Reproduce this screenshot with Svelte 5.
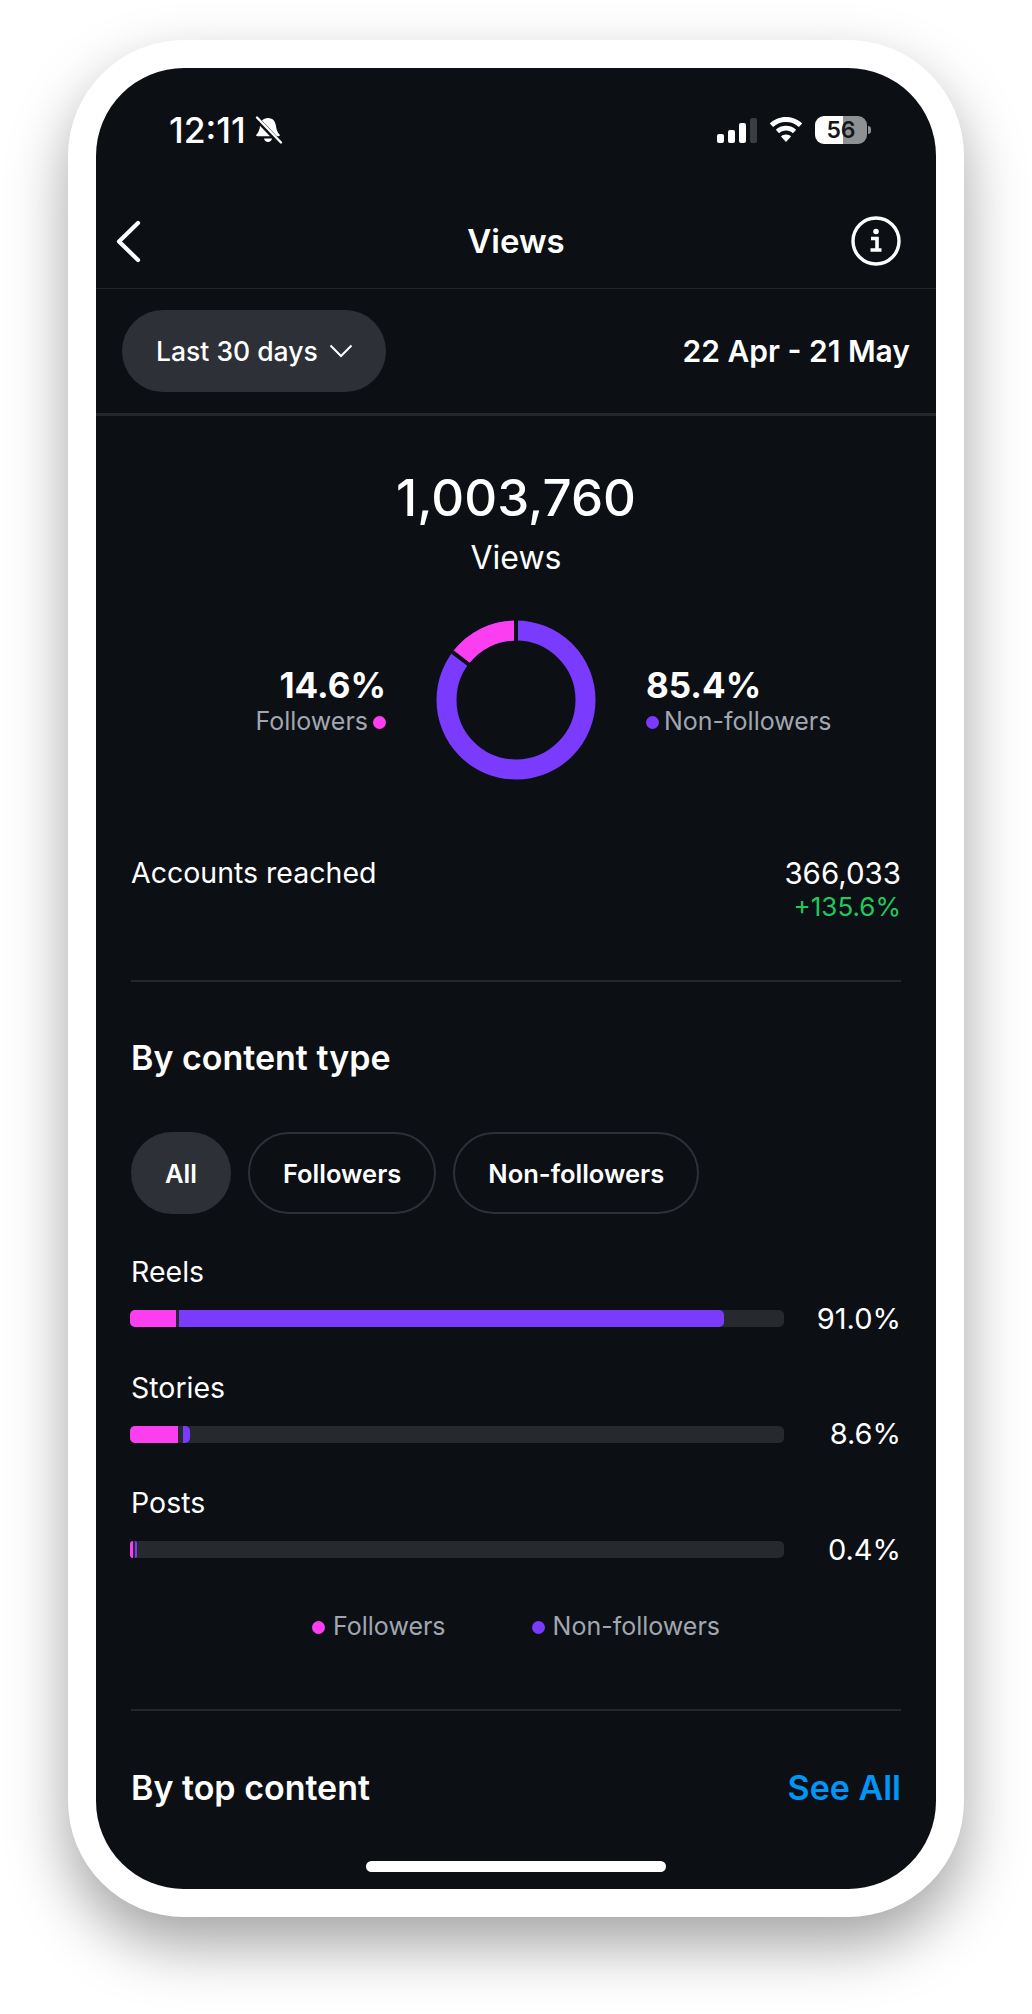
<script>
  const rows = [
    { label: 'Reels', pct: '91.0%', pink: 46, purple: 545, start: 49 },
    { label: 'Stories', pct: '8.6%', pink: 48, purple: 7, start: 53 },
    { label: 'Posts', pct: '0.4%', pink: 3, purple: 2, start: 5 }
  ];
  const tabs = ['All', 'Followers', 'Non-followers'];
</script>

<div class="page">
  <div class="frame">
    <div class="screen">
      <div class="status">
        <div class="time">
          <span>12:11</span>
          <svg width="30" height="30" viewBox="0 0 30 30">
            <path d="M15 3c-5 0-7.500 3.600-8 8-.4 4-1.700 6.500-3.500 8.500-.6.800-.2 1.700.8 1.700h21.400c1 0 1.400-.9.800-1.700-1.800-2-3.100-4.500-3.500-8.500-.5-4.400-3-8-8-8z" fill="#fff"/>
            <path d="M11 23.500h8c-.3 2.200-2 3.500-4 3.500s-3.700-1.300-4-3.500z" fill="#fff"/>
            <path d="M3 3 27 28" stroke="#0c0f14" stroke-width="5"/>
            <path d="M4 2.500 28 27.500" stroke="#fff" stroke-width="2.400" stroke-linecap="round"/>
          </svg>
        </div>
        <div class="indicators">
          <div class="signal">
            <i style="height: 9px"></i>
            <i style="height: 13px"></i>
            <i style="height: 20px"></i>
            <i class="off" style="height: 25px"></i>
          </div>
          <svg class="wifi" width="34" height="26" viewBox="0 0 34 26">
            <path d="M17 0C10.500 0 5 2.500.8 6.500l3.300 3.500C7.500 6.800 12 4.900 17 4.900s9.500 1.900 12.900 5.100l3.300-3.500C29 2.500 23.500 0 17 0z" fill="#fff"/>
            <path d="M17 8.800c-4 0-7.500 1.500-10.200 4l3.300 3.500c1.800-1.700 4.200-2.700 6.900-2.700s5.100 1 6.900 2.700l3.300-3.500c-2.700-2.500-6.200-4-10.200-4z" fill="#fff"/>
            <path d="M17 17.500c-2 0-3.700.7-5 1.900l5 5.600 5-5.600c-1.300-1.200-3-1.900-5-1.900z" fill="#fff"/>
          </svg>
          <div class="battery">
            <div class="cell"><span>56</span></div>
            <div class="cap"></div>
          </div>
        </div>
      </div>

      <div class="nav">
        <svg class="back" width="28" height="44" viewBox="0 0 28 44">
          <path d="M24 4 5 22.500 24 41" fill="none" stroke="#fff" stroke-width="4.200" stroke-linecap="round" stroke-linejoin="round"/>
        </svg>
        <div class="nav-title">Views</div>
        <svg class="info" width="50" height="50" viewBox="0 0 50 50">
          <circle cx="25" cy="25" r="23" fill="none" stroke="#fff" stroke-width="3.400"/>
          <circle cx="25" cy="15.500" r="2.800" fill="#fff"/>
          <path d="M20 22.500h6v10.500M19.500 34h11" fill="none" stroke="#fff" stroke-width="3.600"/>
        </svg>
      </div>

      <div class="range">
        <div class="range-pill">
          <span>Last 30 days</span>
          <svg width="24" height="14" viewBox="0 0 24 14">
            <path d="M1.500 1.500 12 12 22.500 1.500" fill="none" stroke="#fff" stroke-width="2"/>
          </svg>
        </div>
        <div class="range-dates">22 Apr - 21 May</div>
      </div>

      <div class="content">
        <div class="total">1,003,760</div>
        <div class="total-label">Views</div>

        <div class="split">
          <div class="side left">
            <div class="side-pct">14.6%</div>
            <div class="side-name">Followers<i class="dot pink"></i></div>
          </div>
          <svg class="donut" width="160" height="160" viewBox="0 0 160 160">
            <circle cx="80" cy="80" r="69.500" fill="none" stroke="#7a3bff" stroke-width="20"/>
            <circle cx="80" cy="80" r="69.500" fill="none" stroke="#fb3ff0" stroke-width="20" pathLength="100" stroke-dasharray="14.600 85.400" stroke-dashoffset="14.600" transform="rotate(-90 80 80)"/>
            <path d="M80 0v22" stroke="#0c0f14" stroke-width="4"/>
            <path d="M16.600 32.100 34.100 45.500" stroke="#0c0f14" stroke-width="4"/>
          </svg>
          <div class="side right">
            <div class="side-pct">85.4%</div>
            <div class="side-name"><i class="dot purple"></i>Non-followers</div>
          </div>
        </div>

        <div class="reached">
          <span>Accounts reached</span>
          <div class="reached-num">
            <div class="reached-val">366,033</div>
            <div class="delta">+135.6%</div>
          </div>
        </div>

        <div class="rule first"></div>

        <h2 class="title">By content type</h2>

        <div class="tabs">
          {#each tabs as tab, i}
            <div class="tab" class:active={i === 0}>{tab}</div>
          {/each}
        </div>

        <div class="rows">
          {#each rows as row}
            <div class="row">
              <div class="row-label">{row.label}</div>
              <div class="row-line">
                <div class="track">
                  <div class="seg pink" style="width: {row.pink}px"></div>
                  <div class="seg purple" style="left: {row.start}px; width: {row.purple}px"></div>
                </div>
                <div class="row-pct">{row.pct}</div>
              </div>
            </div>
          {/each}
        </div>

        <div class="legend">
          <span><i class="dot pink"></i>Followers</span>
          <span><i class="dot purple"></i>Non-followers</span>
        </div>

        <div class="rule second"></div>

        <div class="top-head">
          <h2 class="title">By top content</h2>
          <span class="see-all">See All</span>
        </div>
      </div>

      <div class="home"></div>
    </div>
  </div>
</div>

<style>
  :global(body) {
    margin: 0;
    background: #fff;
  }

  .page {
    width: 1032px;
    height: 2014px;
    box-sizing: border-box;
    padding: 40px 68px 0;
    overflow: hidden;
    font-family: Inter, "Liberation Sans", sans-serif;
    color: #fff;
  }

  .frame {
    padding: 28px;
    background: #fff;
    border-radius: 116px;
    box-shadow: 0 28px 60px rgba(0, 0, 0, 0.36);
  }

  .screen {
    height: 1821px;
    background: #0c0f14;
    border-radius: 88px;
    overflow: hidden;
  }

  .status {
    height: 124px;
    padding: 0 65px 0 73px;
    display: flex;
    align-items: center;
    justify-content: space-between;
  }

  .time {
    display: flex;
    align-items: center;
    gap: 7px;
    font-size: 35.500px;
    font-weight: 500;
  }

  .indicators {
    display: flex;
    align-items: center;
    gap: 12px;
  }

  .signal {
    display: flex;
    align-items: flex-end;
    gap: 4px;
    height: 25px;
  }

  .signal i {
    width: 7px;
    background: #fff;
    border-radius: 2px;
  }

  .signal i.off {
    background: #3a3d42;
  }

  .battery {
    display: flex;
    align-items: center;
    gap: 1px;
  }

  .cell {
    width: 52px;
    height: 28px;
    border-radius: 9px;
    background: linear-gradient(to right, #fff 54%, #8f9092 54%);
    color: #14161a;
    font-size: 23px;
    font-weight: 600;
    line-height: 28px;
    text-align: center;
  }

  .cap {
    width: 3px;
    height: 8px;
    background: #8f9092;
    border-radius: 0 3px 3px 0;
  }

  .nav {
    height: 94px;
    padding: 2px 35px 0;
    display: grid;
    grid-template-columns: 1fr auto 1fr;
    align-items: center;
    border-bottom: 1px solid #212429;
  }

  .back {
    margin-left: -17px;
  }

  .info {
    justify-self: end;
  }

  .nav-title {
    font-size: 33px;
    font-weight: 600;
  }

  .range {
    height: 124px;
    padding: 0 26px;
    display: flex;
    align-items: center;
    justify-content: space-between;
    border-bottom: 3px solid #24272c;
  }

  .range-pill {
    width: 264px;
    height: 82px;
    box-sizing: border-box;
    padding-left: 34px;
    display: flex;
    align-items: center;
    gap: 11px;
    background: #2d3036;
    border-radius: 41px;
    font-size: 26.500px;
    font-weight: 500;
  }

  .range-dates {
    font-size: 30px;
    font-weight: 600;
  }

  .content {
    padding: 0 35px;
  }

  .total {
    margin-top: 51px;
    font-size: 51px;
    font-weight: 500;
    line-height: 62px;
    text-align: center;
  }

  .total-label {
    margin-top: 10px;
    font-size: 32px;
    line-height: 38px;
    text-align: center;
  }

  .split {
    margin-top: 43px;
    display: flex;
    align-items: center;
    justify-content: center;
    gap: 50px;
  }

  .side {
    width: 240px;
  }

  .side.left {
    text-align: right;
  }

  .side-pct {
    font-size: 35px;
    font-weight: 700;
    line-height: 42px;
  }

  .side-name {
    font-size: 25px;
    line-height: 30px;
    color: #a0a7b0;
  }

  .dot {
    display: inline-block;
    width: 13px;
    height: 13px;
    border-radius: 50%;
    vertical-align: 1px;
  }

  .side.left .dot {
    margin-left: 5px;
  }

  .side.right .dot {
    margin-right: 5px;
  }

  .pink {
    background: #fb3ff0;
  }

  .purple {
    background: #7a3bff;
  }

  .reached {
    margin-top: 76px;
    display: flex;
    justify-content: space-between;
    font-size: 28.500px;
    line-height: 34px;
  }

  .reached-num {
    text-align: right;
  }

  .reached-val {
    font-size: 29.500px;
  }

  .delta {
    margin-top: 3px;
    font-size: 26px;
    line-height: 28px;
    color: #1fc95d;
  }

  .rule {
    height: 2px;
    background: #24272c;
  }

  .rule.first {
    margin-top: 59px;
  }

  .rule.second {
    margin-top: 68px;
  }

  .title {
    margin: 56px 0 0;
    font-size: 34px;
    font-weight: 600;
    line-height: 40px;
  }

  .tabs {
    margin-top: 54px;
    display: flex;
    gap: 17px;
  }

  .tab {
    height: 82px;
    box-sizing: border-box;
    padding: 0 33px;
    display: flex;
    align-items: center;
    border: 2px solid #2d3036;
    border-radius: 41px;
    font-size: 25.500px;
    font-weight: 600;
  }

  .tab.active {
    padding: 0 32px;
    background: #2d3036;
  }

  .rows {
    margin-top: 40px;
    display: flex;
    flex-direction: column;
    gap: 42.500px;
  }

  .row-label {
    font-size: 28.500px;
    line-height: 36px;
  }

  .row-line {
    margin-top: 20px;
    height: 17px;
    display: flex;
    align-items: center;
    justify-content: space-between;
  }

  .track {
    position: relative;
    width: 654px;
    height: 17px;
    margin-left: -1px;
    background: #26292e;
    border-radius: 5px;
  }

  .seg {
    position: absolute;
    top: 0;
    height: 17px;
  }

  .seg.pink {
    left: 0;
    border-radius: 5px 0 0 5px;
  }

  .seg.purple {
    border-radius: 0 5px 5px 0;
  }

  .row-pct {
    font-size: 29px;
    line-height: 34px;
  }

  .legend {
    margin-top: 53px;
    display: flex;
    justify-content: center;
    gap: 86px;
    font-size: 25px;
    line-height: 30px;
    color: #a0a7b0;
  }

  .legend .dot {
    margin-right: 8px;
  }

  .top-head {
    display: flex;
    align-items: flex-end;
    justify-content: space-between;
  }

  .top-head .title {
    margin-top: 57px;
  }

  .see-all {
    font-size: 34px;
    font-weight: 600;
    line-height: 40px;
    color: #0095f6;
  }

  .home {
    width: 300px;
    height: 11px;
    margin: 53px auto 0;
    background: #fff;
    border-radius: 6px;
  }
</style>
